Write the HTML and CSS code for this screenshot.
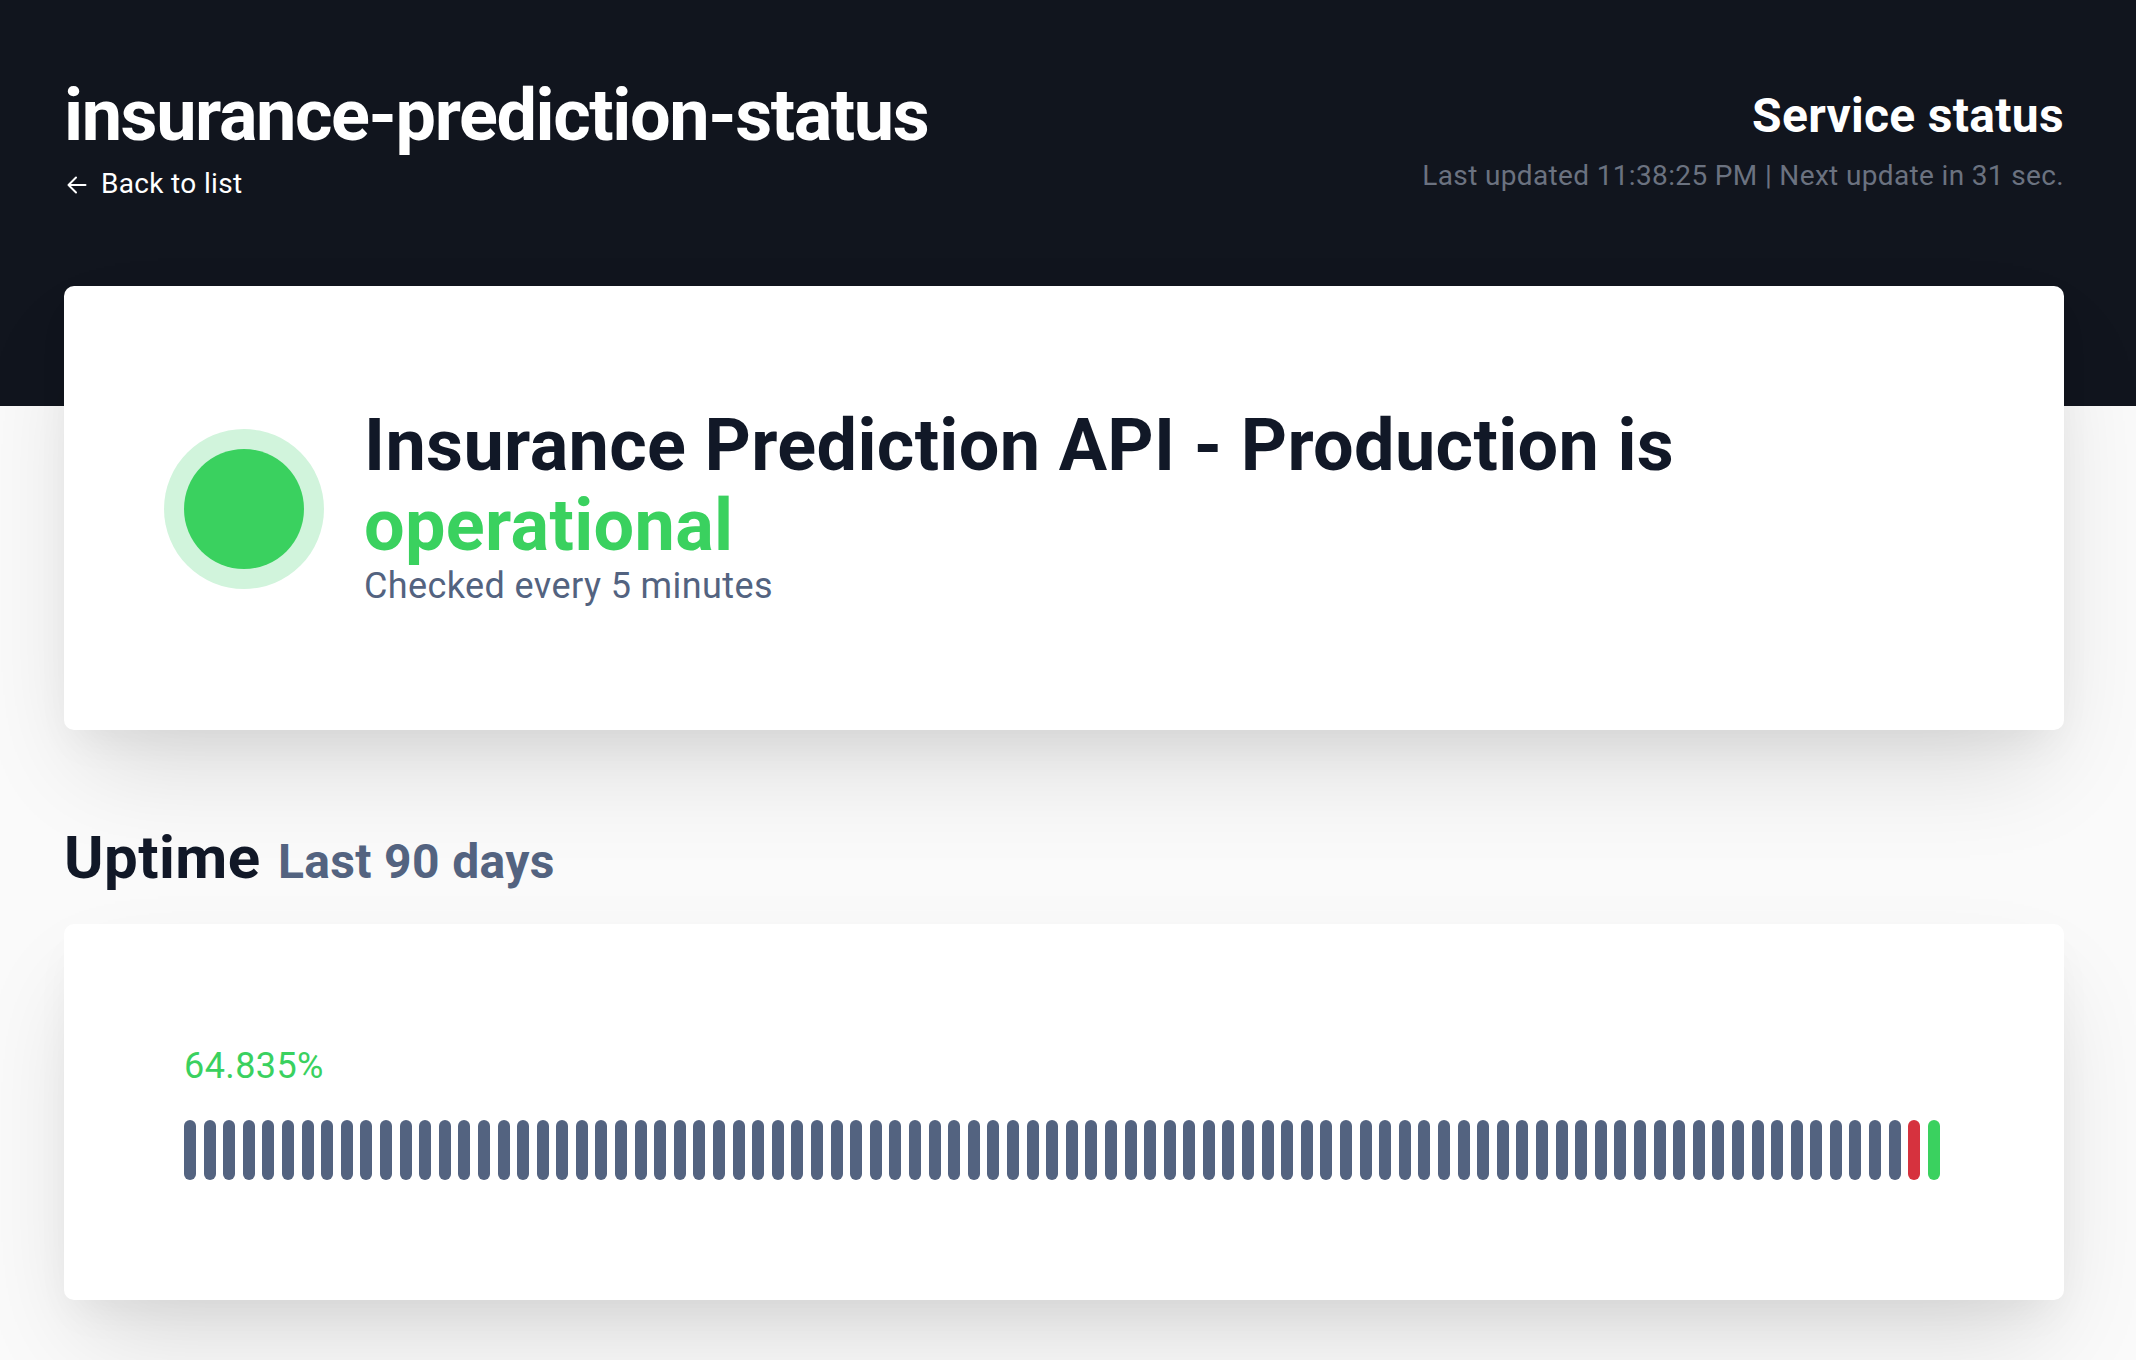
FILE: index.html
```html
<!DOCTYPE html>
<html lang="en">
<head>
<meta charset="utf-8">
<title>insurance-prediction-status</title>
<link rel="stylesheet" href="styles.css">
</head>
<body>
<header class="hero">
  <div class="hero-inner">
    <div class="hero-left">
      <h1 class="site-title">insurance-prediction-status</h1>
      <a class="back-link" href="#">
        <svg class="back-icon" width="20" height="18" viewBox="0 0 20 18" fill="none" stroke="currentColor" stroke-width="2" stroke-linecap="round" stroke-linejoin="round"><path d="M9 1.5 L1.5 9 L9 16.5 M1.5 9 H18.5"/></svg>
        <span>Back to list</span>
      </a>
    </div>
    <div class="hero-right">
      <div class="service-title">Service status</div>
      <div class="updated">Last updated 11:38:25 PM | Next update in 31 sec.</div>
    </div>
  </div>
</header>
<main class="content">
  <section class="card status-card">
    <div class="status-dot"><div class="status-dot-inner"></div></div>
    <div class="status-text">
      <h2 class="status-heading">Insurance Prediction API - Production is <span class="ok">operational</span></h2>
      <p class="status-sub">Checked every 5 minutes</p>
    </div>
  </section>
  <h2 class="uptime-heading">Uptime <span class="uptime-range">Last 90 days</span></h2>
  <section class="card uptime-card">
    <div class="uptime-pct">64.835%</div>
    <div class="bars">
      <span class="bar"></span><span class="bar"></span><span class="bar"></span><span class="bar"></span><span class="bar"></span><span class="bar"></span><span class="bar"></span><span class="bar"></span><span class="bar"></span><span class="bar"></span>
      <span class="bar"></span><span class="bar"></span><span class="bar"></span><span class="bar"></span><span class="bar"></span><span class="bar"></span><span class="bar"></span><span class="bar"></span><span class="bar"></span><span class="bar"></span>
      <span class="bar"></span><span class="bar"></span><span class="bar"></span><span class="bar"></span><span class="bar"></span><span class="bar"></span><span class="bar"></span><span class="bar"></span><span class="bar"></span><span class="bar"></span>
      <span class="bar"></span><span class="bar"></span><span class="bar"></span><span class="bar"></span><span class="bar"></span><span class="bar"></span><span class="bar"></span><span class="bar"></span><span class="bar"></span><span class="bar"></span>
      <span class="bar"></span><span class="bar"></span><span class="bar"></span><span class="bar"></span><span class="bar"></span><span class="bar"></span><span class="bar"></span><span class="bar"></span><span class="bar"></span><span class="bar"></span>
      <span class="bar"></span><span class="bar"></span><span class="bar"></span><span class="bar"></span><span class="bar"></span><span class="bar"></span><span class="bar"></span><span class="bar"></span><span class="bar"></span><span class="bar"></span>
      <span class="bar"></span><span class="bar"></span><span class="bar"></span><span class="bar"></span><span class="bar"></span><span class="bar"></span><span class="bar"></span><span class="bar"></span><span class="bar"></span><span class="bar"></span>
      <span class="bar"></span><span class="bar"></span><span class="bar"></span><span class="bar"></span><span class="bar"></span><span class="bar"></span><span class="bar"></span><span class="bar"></span><span class="bar"></span><span class="bar"></span>
      <span class="bar"></span><span class="bar"></span><span class="bar"></span><span class="bar"></span><span class="bar"></span><span class="bar"></span><span class="bar"></span><span class="bar"></span><span class="bar bar-down"></span><span class="bar bar-up"></span>
    </div>
  </section>
</main>
</body>
</html>
```

FILE: styles.css
```css
* {
  box-sizing: border-box;
}

html, body {
  margin: 0;
  padding: 0;
}

body {
  background: #fafafa;
  font-family: Roboto, "Liberation Sans", Arial, sans-serif;
  color: #111827;
  min-height: 1360px;
}

.hero {
  background: #11151e;
  padding: 76px 72px 202px 64px;
}

.hero-inner {
  display: flex;
  justify-content: space-between;
  align-items: center;
}

.hero-left {
  display: flex;
  flex-direction: column;
  align-items: flex-start;
}

.site-title {
  margin: 0;
  font-size: 72px;
  line-height: 80px;
  font-weight: 700;
  letter-spacing: -1.4px;
  color: #ffffff;
}

.back-link {
  margin-top: 8px;
  display: inline-flex;
  align-items: center;
  gap: 14px;
  color: #ffffff;
  text-decoration: none;
  font-size: 28px;
  line-height: 40px;
  font-weight: 400;
  letter-spacing: 0.33px;
}

.back-icon {
  display: block;
  margin-top: 2px;
  margin-left: 3px;
}

.hero-right {
  display: flex;
  flex-direction: column;
  align-items: flex-end;
}

.service-title {
  font-size: 48px;
  line-height: 64px;
  font-weight: 700;
  letter-spacing: 0.3px;
  color: #ffffff;
}

.updated {
  margin-top: 8px;
  font-size: 28px;
  line-height: 40px;
  letter-spacing: 0.35px;
  color: #6b7280;
}

.content {
  margin-top: -120px;
  padding: 0 72px 60px 64px;
}

.card {
  background: #ffffff;
  border-radius: 10px;
  box-shadow: 0 50px 100px -20px rgba(0, 0, 0, 0.14), 0 20px 40px -10px rgba(0, 0, 0, 0.05);
}

.status-card {
  display: flex;
  align-items: center;
  gap: 40px;
  padding: 120px 100px 124px;
}

.status-dot {
  flex: none;
  width: 160px;
  height: 160px;
  margin-top: 5px;
  border-radius: 50%;
  background: #d1f4dc;
  display: flex;
  align-items: center;
  justify-content: center;
}

.status-dot-inner {
  width: 120px;
  height: 120px;
  border-radius: 50%;
  background: #3ad15f;
}

.status-text {
  display: flex;
  flex-direction: column;
}

.status-heading {
  margin: 0;
  font-size: 72px;
  line-height: 80px;
  font-weight: 700;
  letter-spacing: 0.34px;
  color: #111827;
}

.ok {
  display: block;
  color: #3ad15f;
}

.status-sub {
  margin: 0;
  font-size: 36px;
  line-height: 40px;
  letter-spacing: 0.4px;
  color: #536380;
}

.uptime-heading {
  margin: 92px 0 30px;
  font-size: 60px;
  line-height: 72px;
  font-weight: 700;
  letter-spacing: 0.45px;
  color: #111827;
}

.uptime-range {
  font-size: 48px;
  line-height: 48px;
  font-weight: 700;
  letter-spacing: 0.34px;
  color: #536380;
  margin-left: 2px;
}

.uptime-card {
  padding: 120px 124px 120px 120px;
}

.uptime-pct {
  font-size: 36px;
  line-height: 44px;
  letter-spacing: 0.4px;
  color: #3ad15f;
  margin-bottom: 32px;
}

.bars {
  display: flex;
  justify-content: space-between;
}

.bar {
  width: 12px;
  height: 60px;
  border-radius: 6px;
  background: #536380;
}

.bar-down {
  background: #d6323e;
}

.bar-up {
  background: #3ad15f;
}
```
